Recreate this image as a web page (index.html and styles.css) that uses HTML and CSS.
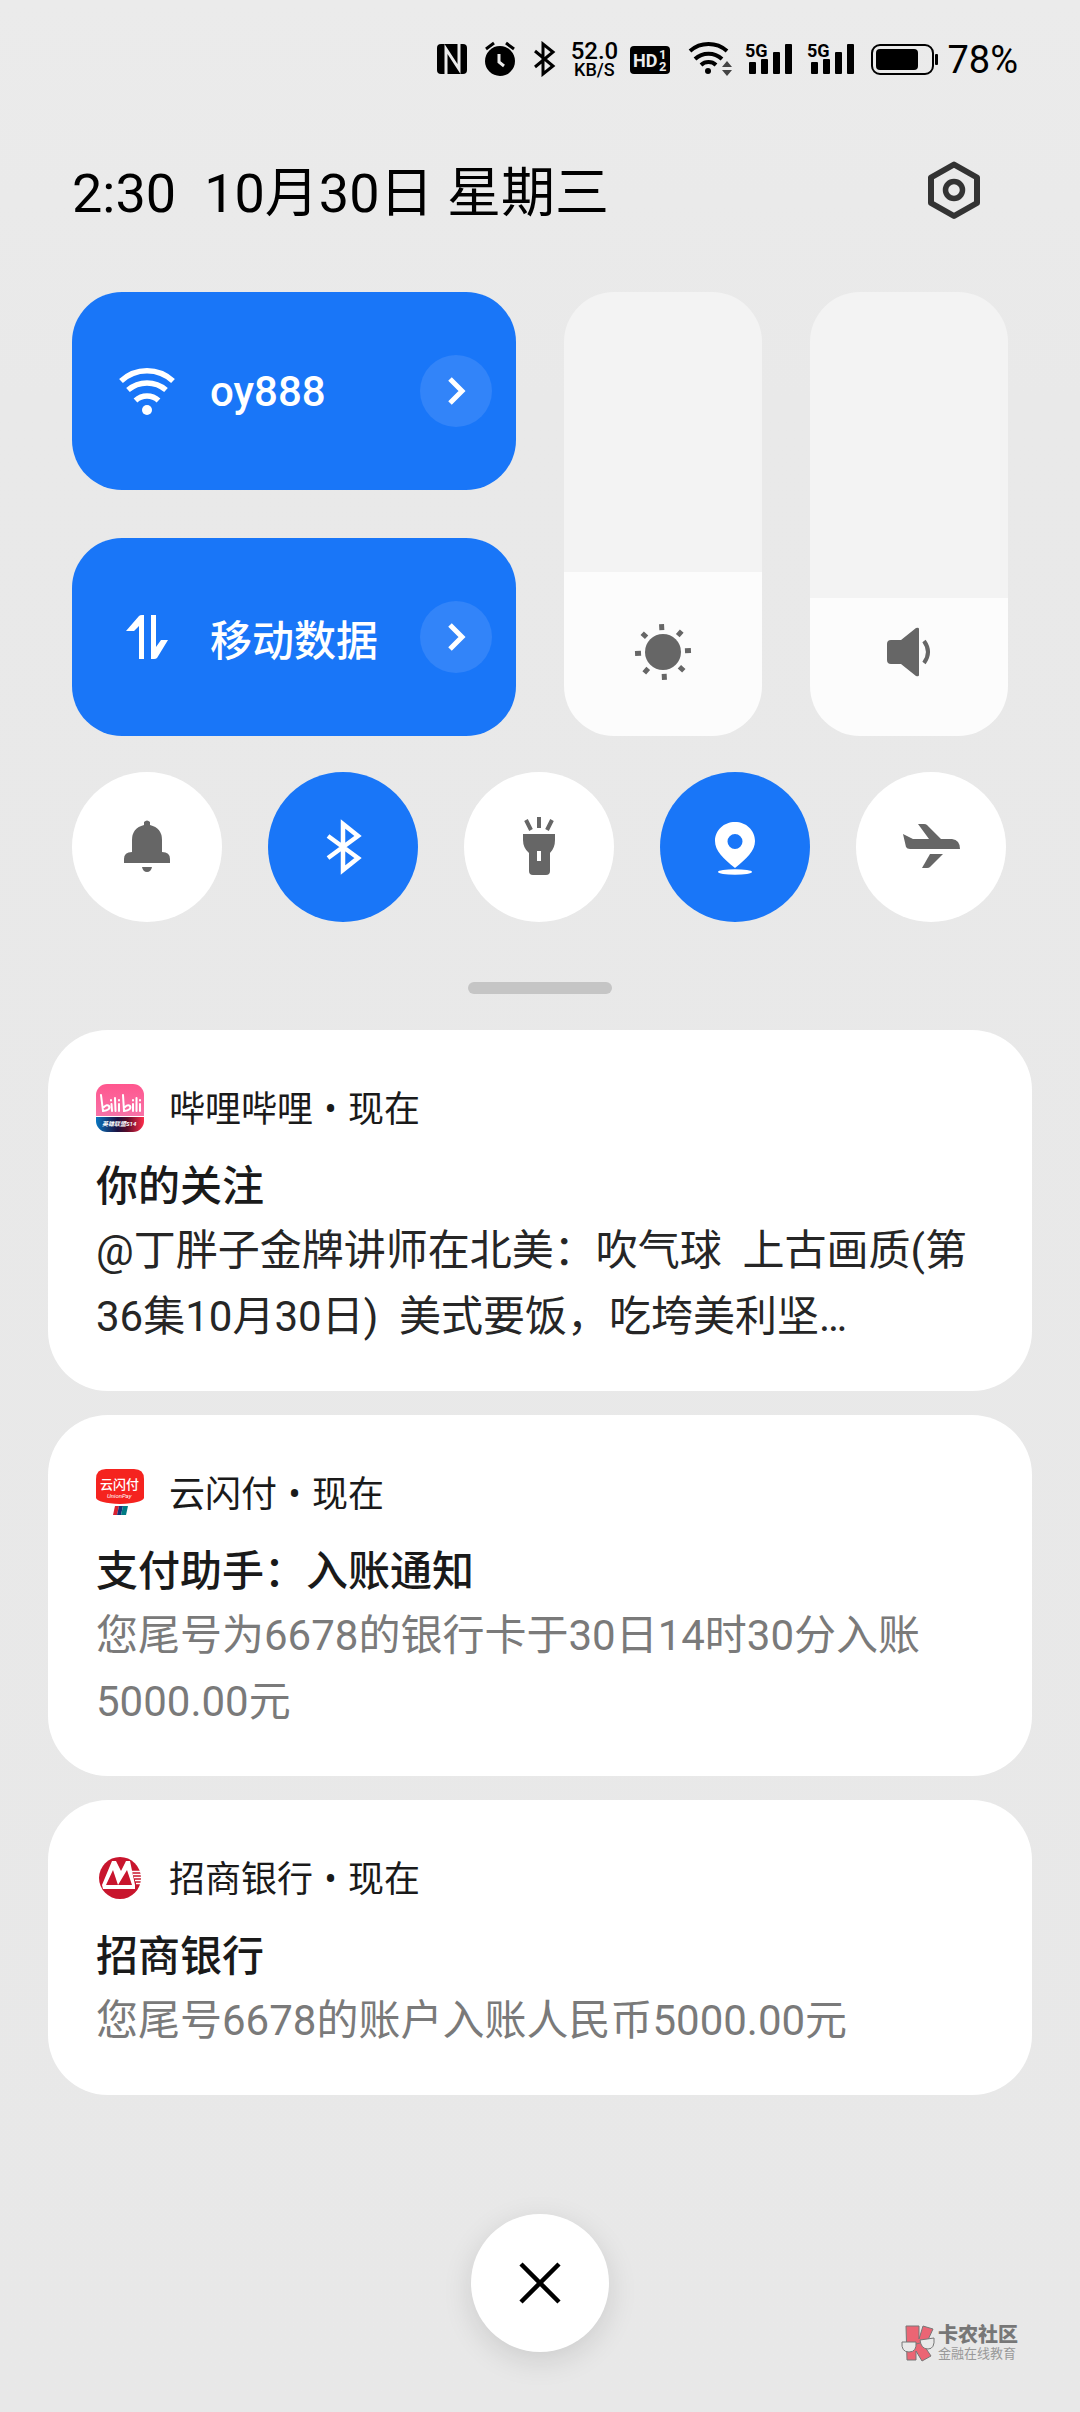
FILE: index.html
```html
<!DOCTYPE html>
<html lang="zh-CN">
<head>
<meta charset="utf-8">
<meta name="viewport" content="width=device-width, initial-scale=1">
<title>控制中心</title>
<link rel="stylesheet" href="styles.css">
</head>
<body>
<div class="shade">
  <div class="status">
    <svg width="38" height="36" viewBox="434 41 38 36" aria-label="NFC">
      <rect x="437" y="44" width="30" height="30" rx="4"/>
      <path d="M446 74V49l13 20V44" fill="none" stroke="#ebebeb" stroke-width="3"/>
    </svg>
    <svg width="40" height="36" viewBox="480 41 40 36" aria-label="闹钟">
      <circle cx="500" cy="61" r="15"/>
      <path d="M486 49l8-6M514 49l-8-6" stroke="#000" stroke-width="3" fill="none"/>
      <path d="M499 54v8l5 4" fill="none" stroke="#ebebeb" stroke-width="3"/>
    </svg>
    <svg width="33" height="36" viewBox="528 41 33 36" aria-label="蓝牙">
      <path d="M535 51l18 15-10 8V44l10 8-18 15" fill="none" stroke="#000" stroke-width="3"/>
    </svg>
    <div class="speed"><span class="speed-value">52.0</span><span class="speed-unit">KB/S</span></div>
    <svg width="48" height="36" viewBox="627 41 48 36" aria-label="HD 1 2">
      <rect x="630" y="46" width="40" height="28" rx="4"/>
      <text class="hd" x="633" y="67">HD</text>
      <text class="hd-sim" x="659" y="59">1</text>
      <text class="hd-sim" x="659" y="71">2</text>
    </svg>
    <svg width="52" height="36" viewBox="683 41 52 36" aria-label="WLAN">
      <g fill="none" stroke="#000" stroke-width="4">
        <path d="M690 51a28 28 0 0 1 37 0M695 59a20 20 0 0 1 27 0M701 65a11 11 0 0 1 15 0"/>
      </g>
      <circle cx="708" cy="71" r="3"/>
      <path d="M722 67l5-6 5 6zM722 70l5 6 5-6z" fill="#444"/>
    </svg>
    <svg width="54" height="36" viewBox="743 41 54 36" aria-label="5G 信号">
      <text class="net" x="745" y="57">5G</text>
      <g><rect x="749" y="62" width="7" height="12" rx="1"/><rect x="761" y="59" width="7" height="15" rx="1"/><rect x="773" y="52" width="7" height="22" rx="1"/><rect x="785" y="44" width="7" height="30" rx="1"/></g>
    </svg>
    <svg width="54" height="36" viewBox="743 41 54 36" aria-label="5G 信号">
      <text class="net" x="745" y="57">5G</text>
      <g><rect x="749" y="62" width="7" height="12" rx="1"/><rect x="761" y="59" width="7" height="15" rx="1"/><rect x="773" y="52" width="7" height="22" rx="1"/><rect x="785" y="44" width="7" height="30" rx="1"/></g>
    </svg>
    <svg width="72" height="36" viewBox="867 41 72 36" aria-label="电池">
      <rect x="872" y="45" width="61" height="29" rx="8" fill="none" stroke="#000" stroke-width="2"/>
      <rect x="876" y="49" width="42" height="21" rx="4"/>
      <rect x="935" y="54" width="3" height="11" rx="1"/>
    </svg>
    <span class="battery">78%</span>
  </div>

  <header class="head">
    <h1 class="clock"><time>2:30</time><span>10月30日 星期三</span></h1>
    <button class="plain" type="button" aria-label="设置">
      <svg width="60" height="60" viewBox="0 0 60 60" fill="none" stroke="#333">
        <path d="M30 4.500L53 17.500V43L30 56L7 43V17.500Z" stroke-width="6" stroke-linejoin="round"/>
        <circle cx="30" cy="30" r="8.500" stroke-width="5.500"/>
      </svg>
    </button>
  </header>

  <section class="controls" aria-label="快捷开关">
    <div class="tiles">
      <div class="tile">
        <button class="toggle" type="button" aria-pressed="true">
          <svg width="60" height="60" viewBox="0 0 60 60">
            <path d="M4 20a38 38 0 0 1 52 0M11 29a29 29 0 0 1 38 0M18.500 39.500a17 17 0 0 1 23 0" fill="none" stroke="#fff" stroke-width="5.500"/>
            <circle cx="30" cy="49" r="5" fill="#fff"/>
          </svg>
          <span>oy888</span>
        </button>
        <button class="more" type="button" aria-label="WLAN 详情">
          <svg width="36" height="36" viewBox="0 0 36 36"><path d="M12 6l12 12-12 12" fill="none" stroke="#fff" stroke-width="5"/></svg>
        </button>
      </div>
      <div class="tile">
        <button class="toggle" type="button" aria-pressed="true">
          <svg width="60" height="60" viewBox="0 0 60 60" fill="#fff">
            <path d="M9 24L22 9q1-1 3-1h2v44h-5V19l-5 5z"/>
            <path d="M34 8h5v32l5-7h7L40 51q-1 1-3 1h-3z"/>
          </svg>
          <span>移动数据</span>
        </button>
        <button class="more" type="button" aria-label="移动数据详情">
          <svg width="36" height="36" viewBox="0 0 36 36"><path d="M12 6l12 12-12 12" fill="none" stroke="#fff" stroke-width="5"/></svg>
        </button>
      </div>
    </div>
    <label class="slider">
      <input type="range" min="0" max="100" value="37" aria-label="亮度" style="--level: 37%">
      <svg width="60" height="60" viewBox="0 0 60 60">
        <circle cx="30" cy="30" r="18" fill="#666"/>
        <g stroke="#666" stroke-width="5" transform="rotate(-3 30 30)">
          <path d="M30 2v6M30 52v6M2 30h6M52 30h6M10.200 10.200l4.200 4.200M45.600 45.600l4.200 4.200M10.200 49.800l4.200-4.200M45.600 14.400l4.200-4.200"/>
        </g>
      </svg>
    </label>
    <label class="slider">
      <input type="range" min="0" max="100" value="31" aria-label="音量" style="--level: 31%">
      <svg width="60" height="60" viewBox="0 0 60 60">
        <path d="M12 18h10L37 6q3-1 3 1v46q0 2-3 1L22 42H12q-4 0-4-4V22q0-4 4-4z" fill="#666"/>
        <path d="M45 19q8 11 0 22" fill="none" stroke="#666" stroke-width="4"/>
      </svg>
    </label>
  </section>

  <div class="rounds">
    <button class="round" type="button" aria-label="响铃">
      <svg width="60" height="60" viewBox="0 0 60 60" fill="#666">
        <path d="M15 35V23q0-12 12-15V5q3-3 6 0v3q12 3 12 15v12q8 0 8 7v4H7v-4q0-7 8-7z"/>
        <path d="M25 50h10q-1 5-5 5t-5-5z"/>
      </svg>
    </button>
    <button class="round on" type="button" aria-label="蓝牙" aria-pressed="true">
      <svg width="60" height="60" viewBox="0 0 60 60"><path d="M15 19l30 22-15 12V7l15 12-30 22" fill="none" stroke="#fff" stroke-width="4.500"/></svg>
    </button>
    <button class="round" type="button" aria-label="手电筒">
      <svg width="60" height="60" viewBox="0 0 60 60">
        <path d="M30 0v11M17 3l5 10M43 3l-5 10" stroke="#666" stroke-width="4"/>
        <path d="M14 17h32v6q0 8-5 13v18q0 4-4 4H24q-4 0-4-4V36q-6-5-6-13zM28 34v10h4V34z" fill="#666" fill-rule="evenodd"/>
      </svg>
    </button>
    <button class="round on" type="button" aria-label="定位" aria-pressed="true">
      <svg width="60" height="60" viewBox="0 0 60 60" fill="#fff">
        <path d="M30 5c11 0 20 8 20 19 0 10-8 17-20 27C18 41 10 34 10 24 10 13 19 5 30 5zm0 12a7.500 7.500 0 1 0 0 15 7.500 7.500 0 1 0 0-15z" fill-rule="evenodd"/>
        <ellipse cx="30" cy="55" rx="17" ry="2.700"/>
      </svg>
    </button>
    <button class="round" type="button" aria-label="飞行模式">
      <svg width="60" height="60" viewBox="0 0 60 60" fill="#666">
        <path d="M2 17l10 5h16L17 7h6q2 0 3 1l14 14h11q8 1 8 10H9q-3 0-4-2z"/>
        <path d="M29 37h13L29 50q-1 1-3 1h-5z"/>
      </svg>
    </button>
  </div>

  <div class="handle"></div>

  <main class="cards">
    <article class="card">
      <div class="source">
        <svg width="48" height="48" viewBox="0 0 48 48" role="img" aria-label="哔哩哔哩图标">
          <defs>
            <clipPath id="biliClip"><rect width="48" height="48" rx="11"/></clipPath>
            <linearGradient id="biliPink" x2="0" y2="1"><stop stop-color="#ff568e"/><stop offset="1" stop-color="#f773a8"/></linearGradient>
            <linearGradient id="biliBand"><stop stop-color="#0876c0"/><stop offset=".45" stop-color="#1c1140"/><stop offset=".65" stop-color="#5b0c28"/><stop offset="1" stop-color="#ff2c4b"/></linearGradient>
          </defs>
          <g clip-path="url(#biliClip)">
            <rect width="48" height="33" fill="url(#biliPink)"/>
            <rect y="33" width="48" height="15" fill="url(#biliBand)"/>
            <path d="M0 32.500h48" stroke="#fff"/>
          </g>
          <g fill="none" stroke="#fff" stroke-width="2" stroke-linecap="round">
            <path d="M5 11l2 16q8-1 6-5-2-2-5 1M15.500 20l.5 7M19 14l.5 13M23 20v7"/>
            <path d="M27 11l1 16q8-1 6-5-2-2-5 1M37 20v7M40.500 14v13M44 20v7M15 16v.5M23 16v.5M37 16v.5M44 16v.5"/>
          </g>
          <text class="bili-tag" x="6" y="42">英雄联盟S14</text>
        </svg>
        <span>哔哩哔哩<span class="dot">•</span>现在</span>
      </div>
      <h2>你的关注</h2>
      <p class="strong">@丁胖子金牌讲师在北美：吹气球  上古画质(第36集10月30日)  美式要饭，吃垮美利坚…</p>
    </article>

    <article class="card">
      <div class="source">
        <svg width="48" height="48" viewBox="0 0 48 48" role="img" aria-label="云闪付图标">
          <path d="M10 0h28q10 0 10 10v19Q46 34 24 35 2 34 0 29V10Q0 0 10 0z" fill="#f5231f"/>
          <text class="union-cn" x="4" y="20">云闪付</text>
          <text class="union-en" x="11" y="29">UnionPay</text>
          <path d="M19 37h4l-2 9h-4z" fill="#d8202f"/>
          <path d="M23 37h4l-2 9h-4z" fill="#16347a"/>
          <path d="M27 37h5l-2 9h-5z" fill="#007b84"/>
        </svg>
        <span>云闪付<span class="dot">•</span>现在</span>
      </div>
      <h2>支付助手：入账通知</h2>
      <p>您尾号为6678的银行卡于30日14时30分入账5000.00元</p>
    </article>

    <article class="card">
      <div class="source">
        <svg width="48" height="48" viewBox="0 0 48 48" role="img" aria-label="招商银行图标">
          <circle cx="24" cy="24" r="21" fill="#c8152d"/>
          <path d="M6 31L16 7h4l5 10 5-10h4l5 24v4H7z" fill="#fff"/>
          <path d="M17 16l5 15H10zM31 16l5 15H22z" fill="#c8152d"/>
          <path d="M36 17.500h10M37 20.500h9M38 23.500h8M39 26.500h7M40 29.500h6" stroke="#fff" stroke-width="1.300"/>
        </svg>
        <span>招商银行<span class="dot">•</span>现在</span>
      </div>
      <h2>招商银行</h2>
      <p>您尾号6678的账户入账人民币5000.00元</p>
    </article>
  </main>

  <button class="close" type="button" aria-label="清除全部">
    <svg width="60" height="60" viewBox="0 0 60 60"><path d="M11 11l38 38M49 11L11 49" stroke="#000" stroke-width="4.500"/></svg>
  </button>

  <div class="mark">
    <svg width="38" height="38" viewBox="0 0 38 38" stroke="#777" stroke-width="1">
      <path d="M6 2h13v13l4-13 10 3-6 13q-4 3-2 5l6 9-9 5-6-10v9H7z" fill="#eb6574"/>
      <path d="M2 18h14q1 10-7 10t-7-10zM20 16l14-2q1 11-6 11t-8-9zM16 20l4-1" fill="#e9e9e9"/>
    </svg>
    <div class="mark-text"><span class="mark-name">卡农社区</span><span class="mark-sub">金融在线教育</span></div>
  </div>
</div>
</body>
</html>
```
FILE: styles.css
```css
* {
  box-sizing: border-box;
}

body {
  margin: 0;
  background: #e9e9e9;
  color: #000;
  font-family: Roboto, "Noto Sans CJK SC", sans-serif;
}

button {
  display: flex;
  align-items: center;
  padding: 0;
  border: 0;
  background: none;
  color: inherit;
  font: inherit;
}

svg {
  flex: none;
  display: block;
}

h1,
h2,
p {
  margin: 0;
}

.shade {
  position: relative;
  min-height: 100vh;
  padding-bottom: 60px;
  background: linear-gradient(#ebebeb, #e9e9e9 400px, #e8e8e8);
}

/* Status bar */
.status {
  display: flex;
  align-items: center;
  justify-content: flex-end;
  gap: 8px;
  height: 118px;
  padding-right: 62px;
}

.speed {
  display: flex;
  flex-direction: column;
  align-items: center;
  width: 50px;
  padding-top: 2px;
  font-weight: 500;
}

.speed-value {
  font-size: 24px;
  line-height: 20px;
}

.speed-unit {
  font-size: 18px;
  line-height: 18px;
}

.hd,
.hd-sim {
  fill: #ebebeb;
  font-weight: 700;
}

.hd {
  font-size: 18px;
}

.hd-sim {
  font-size: 13px;
}

.net {
  font-size: 18px;
  font-weight: 700;
}

.battery {
  padding-top: 2px;
  font-size: 38px;
}

/* Clock and settings */
.head {
  display: flex;
  align-items: center;
  justify-content: space-between;
  height: 68px;
  margin: 38px 96px 68px 72px;
}

.clock {
  display: flex;
  gap: 28px;
  padding-top: 8px;
  font-size: 54px;
  font-weight: 400;
  line-height: 68px;
}

/* Quick controls */
.controls {
  display: grid;
  grid-template-columns: 444fr 198fr 198fr;
  gap: 48px;
  margin: 0 72px;
}

.tiles {
  display: grid;
  gap: 48px;
}

.tile {
  display: flex;
  align-items: center;
  height: 198px;
  padding-right: 24px;
  border-radius: 50px;
  background: #1976f8;
  color: #fff;
}

.toggle {
  flex: 1;
  gap: 33px;
  height: 100%;
  padding-left: 45px;
  font-size: 42px;
  font-weight: 500;
}

.more {
  justify-content: center;
  width: 72px;
  height: 72px;
  border-radius: 50%;
  background: #3284f9;
}

.slider {
  display: grid;
}

.slider > * {
  grid-area: 1 / 1;
}

.slider input {
  appearance: none;
  writing-mode: vertical-lr;
  direction: rtl;
  width: 100%;
  height: 100%;
  margin: 0;
  border-radius: 50px;
  background: linear-gradient(to top, #fcfcfc var(--level), #f3f3f3 var(--level));
}

.slider input::-webkit-slider-thumb {
  appearance: none;
  width: 1px;
  height: 1px;
}

.slider svg {
  z-index: 1;
  align-self: end;
  justify-self: center;
  margin-bottom: 54px;
  pointer-events: none;
}

.rounds {
  display: flex;
  justify-content: space-between;
  margin: 36px 74px 60px 72px;
}

.round {
  justify-content: center;
  width: 150px;
  height: 150px;
  border-radius: 50%;
  background: #fff;
}

.round.on {
  background: #1976f8;
}

.handle {
  width: 144px;
  height: 12px;
  margin: 0 auto 36px;
  border-radius: 6px;
  background: #c5c5c5;
}

/* Notifications */
.cards {
  display: grid;
  gap: 24px;
  margin: 0 48px;
}

.card {
  padding: 54px 48px 41px;
  border-radius: 60px;
  background: #fff;
  color: #1a1a1a;
}

.source {
  display: flex;
  align-items: center;
  gap: 25px;
  height: 48px;
  margin-bottom: 24px;
  font-size: 36px;
  line-height: 44px;
}

.source > span {
  padding-top: 4px;
}

.dot {
  display: inline-block;
  width: 35px;
  text-align: center;
}

.card h2 {
  font-size: 42px;
  font-weight: 500;
  line-height: 62px;
}

.card p {
  color: #7a7a7a;
  font-size: 42px;
  line-height: 66px;
  white-space: pre-wrap;
}

.card .strong {
  color: #262626;
}

.bili-tag {
  fill: #fff;
  font-size: 6px;
  font-style: italic;
  font-weight: 700;
}

.union-cn {
  fill: #fff;
  font-size: 13px;
  font-weight: 500;
}

.union-en {
  fill: #fff;
  font-size: 6px;
  font-style: italic;
}

.close {
  justify-content: center;
  width: 138px;
  height: 138px;
  margin: 119px auto 0;
  border-radius: 50%;
  background: #fff;
  box-shadow: 0 8px 30px rgba(0, 0, 0, 0.12);
}

/* Watermark laid over the page corner */
.mark {
  position: absolute;
  right: 62px;
  bottom: 50px;
  display: flex;
  align-items: center;
  color: #777;
}

.mark-text {
  display: grid;
}

.mark-name {
  font-size: 20px;
  font-weight: 900;
  line-height: 22px;
}

.mark-sub {
  color: #999;
  font-size: 13px;
  line-height: 16px;
}
```
